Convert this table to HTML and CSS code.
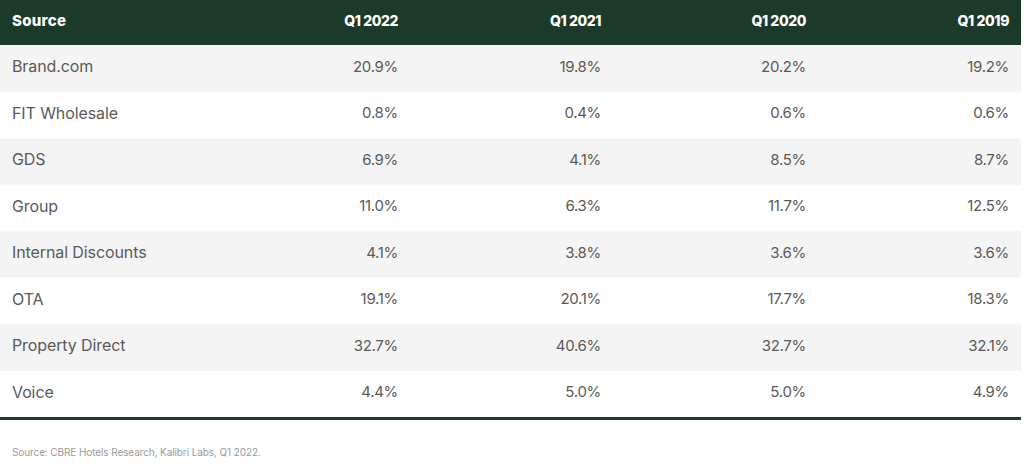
FILE: index.html
```html
<!DOCTYPE html>
<html>
<head>
<meta charset="utf-8">
<link rel="stylesheet" href="styles.css">
</head>
<body>
<div class="wrap">
<table class="data">
<colgroup><col class="c1"><col class="c2"><col class="c3"><col class="c4"><col class="c5"></colgroup>
<thead>
<tr><th class="src">Source</th><th>Q1 2022</th><th>Q1 2021</th><th>Q1 2020</th><th>Q1 2019</th></tr>
</thead>
<tbody>
<tr><td class="src">Brand.com</td><td>20.9%</td><td>19.8%</td><td>20.2%</td><td>19.2%</td></tr>
<tr><td class="src">FIT Wholesale</td><td>0.8%</td><td>0.4%</td><td>0.6%</td><td>0.6%</td></tr>
<tr><td class="src">GDS</td><td>6.9%</td><td>4.1%</td><td>8.5%</td><td>8.7%</td></tr>
<tr><td class="src">Group</td><td>11.0%</td><td>6.3%</td><td>11.7%</td><td>12.5%</td></tr>
<tr><td class="src">Internal Discounts</td><td>4.1%</td><td>3.8%</td><td>3.6%</td><td>3.6%</td></tr>
<tr><td class="src">OTA</td><td>19.1%</td><td>20.1%</td><td>17.7%</td><td>18.3%</td></tr>
<tr><td class="src">Property Direct</td><td>32.7%</td><td>40.6%</td><td>32.7%</td><td>32.1%</td></tr>
<tr><td class="src">Voice</td><td>4.4%</td><td>5.0%</td><td>5.0%</td><td>4.9%</td></tr>
</tbody>
</table>
<p class="note">Source: CBRE Hotels Research, Kalibri Labs, Q1 2022.</p>
</div>
</body>
</html>
```
FILE: styles.css
```css
html, body { margin: 0; padding: 0; background: #fff; }
.wrap { width: 1021px; font-family: "Inter", "Liberation Sans", sans-serif; }
.data { width: 1021px; border-collapse: collapse; table-layout: fixed; border-bottom: 3px solid #1f3d2e; }
.c1 { width: 206px; }
.c2 { width: 204px; }
.c3 { width: 203px; }
.c4 { width: 205px; }
.c5 { width: 203px; }
.data th { background: #1b3a2a; color: #fff; font-weight: 800; font-size: 14px; height: 40px; padding: 0 12px 5px 0; text-align: right; letter-spacing: -0.4px; }
.data th.src { text-align: left; padding: 0 0 5px 12px; font-size: 15px; letter-spacing: 0.3px; }
.data td { height: 42.5px; padding: 0 12px 4px 0; text-align: right; color: #5a5a5a; font-size: 15px; letter-spacing: -0.3px; }
.data td.src { text-align: left; padding: 0 0 4px 12px; font-size: 16px; letter-spacing: -0.1px; }
.data tbody tr:nth-child(odd) { background: #f4f4f4; }
.note { margin: 26px 0 0 12px; font-size: 10px; color: #9a9a9a; letter-spacing: -0.1px; }
```
